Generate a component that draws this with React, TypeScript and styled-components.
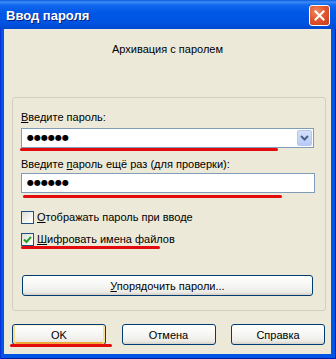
import styled, { createGlobalStyle } from 'styled-components';

const GlobalStyle = createGlobalStyle`
  html, body {
    margin: 0;
    padding: 0;
    background: #ffffff;
  }
  body {
    font-family: "Liberation Sans", Arial, sans-serif;
    font-size: 11px;
    color: #000000;
  }
`;

const Window = styled.div`
  width: 336px;
  height: 359px;
  display: flex;
  flex-direction: column;
  background: #0055e5;
  box-sizing: border-box;
  box-shadow: inset 1px 0 #0831d9, inset -1px 0 #001ea0, inset 0 -1px #001ea0;
`;

const TitleBar = styled.div`
  height: 29px;
  flex: none;
  display: flex;
  align-items: center;
  justify-content: space-between;
  box-sizing: border-box;
  padding: 2px 6px 0 6px;
  background: linear-gradient(
    to bottom,
    #0a5ae0 0px,
    #3d8cf5 2px,
    #1268ee 5px,
    #0058e6 12px,
    #0055e3 22px,
    #0048d0 29px
  );
`;

const Title = styled.div`
  font-family: "Liberation Sans", Arial, sans-serif;
  font-weight: bold;
  font-size: 13px;
  color: #ffffff;
  text-shadow: 1px 1px 0 #0a1e80;
`;

const CloseButton = styled.div`
  width: 21px;
  height: 21px;
  box-sizing: border-box;
  border: 1px solid #ffffff;
  border-radius: 3px;
  background: radial-gradient(circle at 35% 30%, #f08a64 0%, #e2582f 45%, #c63a1a 100%);
  display: flex;
  align-items: center;
  justify-content: center;
`;

const Client = styled.div`
  flex: 1;
  margin: 0 5px 5px 4px;
  background: #ece9d8;
  display: flex;
  flex-direction: column;
  padding: 14px 0 0 8px;
  box-sizing: border-box;
`;

const Heading = styled.div`
  line-height: 13px;
  text-align: center;
  margin-left: -8px;
`;

const Group = styled.div`
  margin-top: 41px;
  width: 314px;
  box-sizing: border-box;
  border: 1px solid #d0d0bf;
  border-radius: 3px;
  padding: 13px 0 14px 8px;
  display: flex;
  flex-direction: column;
`;

const Label = styled.div<{ $gap?: number }>`
  line-height: 13px;
  margin-top: ${(p) => p.$gap ?? 0}px;
  white-space: nowrap;
`;

const Key = styled.u`
  text-decoration: underline;
  text-underline-offset: 1px;
`;

const Field = styled.div<{ $gap: number; $width: number }>`
  position: relative;
  margin-top: ${(p) => p.$gap}px;
  width: ${(p) => p.$width}px;
  height: 20px;
  box-sizing: border-box;
  border: 1px solid #7f9db9;
  background: #ffffff;
  display: flex;
  align-items: center;
  justify-content: space-between;
`;

const Dots = styled.span`
  font-family: "DejaVu Sans", sans-serif;
  font-size: 8px;
  letter-spacing: 0px;
  padding-left: 5px;
  line-height: 18px;
`;

const DropButton = styled.div`
  width: 15px;
  height: 16px;
  margin-right: 1px;
  box-sizing: border-box;
  border: 1px solid #b4c8f0;
  border-radius: 2px;
  background: linear-gradient(to bottom, #d5e1fb, #b7cbf7);
  display: flex;
  align-items: center;
  justify-content: center;
`;

const Mark = styled.div<{ $top: number; $left: number; $width: number; $height?: number }>`
  position: absolute;
  top: ${(p) => p.$top}px;
  left: ${(p) => p.$left}px;
  width: ${(p) => p.$width}px;
  height: ${(p) => p.$height ?? 3}px;
  background: #e30b0b;
  border-radius: 2px;
  pointer-events: none;
`;

const CheckRow = styled.div<{ $gap: number }>`
  position: relative;
  margin-top: ${(p) => p.$gap}px;
  display: flex;
  align-items: center;
  gap: 3px;
  height: 13px;
  line-height: 13px;
`;

const Box = styled.div`
  width: 13px;
  height: 13px;
  box-sizing: border-box;
  border: 1px solid #1c5180;
  background: linear-gradient(135deg, #dcdcd7 0%, #f4f4f1 60%, #ffffff 100%);
  display: flex;
  align-items: center;
  justify-content: center;
`;

const Button = styled.div<{ $width: number; $default?: boolean }>`
  position: relative;
  width: ${(p) => p.$width}px;
  height: 21px;
  box-sizing: border-box;
  border: 1px solid #003c74;
  border-radius: 3px;
  background: linear-gradient(to bottom, #ffffff 0%, #f6f6f3 50%, #ecebe6 85%, #d6d0c5 100%);
  display: flex;
  align-items: center;
  justify-content: center;
  box-shadow: ${(p) =>
    p.$default
      ? 'inset 0 1px #fff0cf, inset 2px 0 #fbdd8e, inset -2px 0 #fbdd8e, inset 0 -2px #f0a83a'
      : 'none'};
`;

const WideButton = styled(Button)`
  margin: 29px 0 0 1px;
`;

const ButtonRow = styled.div`
  margin-top: 13px;
  width: 313px;
  display: flex;
  justify-content: space-between;
`;

export default function App() {
  return (
    <>
      <GlobalStyle />
      <Window>
        <TitleBar>
          <Title>Ввод пароля</Title>
          <CloseButton>
            <svg width="11" height="11" viewBox="0 0 11 11">
              <path d="M1.5 1.5 L9.5 9.5 M9.5 1.5 L1.5 9.5" stroke="#ffffff" strokeWidth="2" strokeLinecap="square" />
            </svg>
          </CloseButton>
        </TitleBar>
        <Client>
          <Heading>Архивация с паролем</Heading>
          <Group>
            <Label>
              <Key>В</Key>ведите пароль:
            </Label>
            <Field $gap={4} $width={293}>
              <Dots>●●●●●●</Dots>
              <DropButton>
                <svg width="9" height="6" viewBox="0 0 9 6">
                  <path d="M1 1 L4.5 4.5 L8 1" fill="none" stroke="#4d6185" strokeWidth="2" />
                </svg>
              </DropButton>
              <Mark $top={19} $left={-2} $width={258} />
            </Field>
            <Label $gap={10}>
              Введите <Key>п</Key>ароль ещё раз (для проверки):
            </Label>
            <Field $gap={2} $width={294}>
              <Dots>●●●●●●</Dots>
              <Mark $top={21} $left={1} $width={259} />
            </Field>
            <CheckRow $gap={18}>
              <Box />
              <span>
                <Key>О</Key>тображать пароль при вводе
              </span>
            </CheckRow>
            <CheckRow $gap={9}>
              <Box>
                <svg width="9" height="9" viewBox="0 0 9 9">
                  <path d="M1 4.5 L3.5 7 L8 1.8" fill="none" stroke="#21a121" strokeWidth="2" />
                </svg>
              </Box>
              <span>
                <Key>Ш</Key>ифровать имена файлов
              </span>
              <Mark $top={13} $left={0} $width={139} />
            </CheckRow>
            <WideButton $width={291}>
              <span>
                <Key>У</Key>порядочить пароли...
              </span>
            </WideButton>
          </Group>
          <ButtonRow>
            <Button $width={94} $default>
              OK
              <Mark $top={19} $left={-3} $width={102} $height={3} />
            </Button>
            <Button $width={94}>Отмена</Button>
            <Button $width={94}>Справка</Button>
          </ButtonRow>
        </Client>
      </Window>
    </>
  );
}
